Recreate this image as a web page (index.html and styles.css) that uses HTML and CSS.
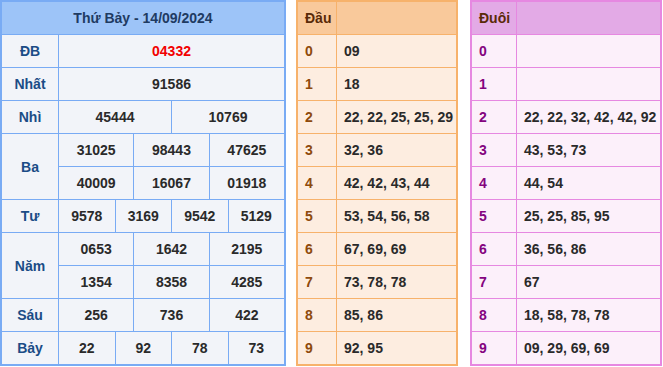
FILE: index.html
```html
<!DOCTYPE html>
<html lang="vi">
<head>
<meta charset="utf-8">
<title>Kết quả xổ số Thứ Bảy - 14/09/2024</title>
<link rel="stylesheet" href="styles.css">
</head>
<body>
<div class="wrap">
  <div class="kq">
    <div class="title">Thứ Bảy - 14/09/2024</div>
    <div class="lbl">ĐB</div><div class="v s12 red">04332</div>
    <div class="lbl">Nhất</div><div class="v s12">91586</div>
    <div class="lbl">Nhì</div><div class="v s6">45444</div><div class="v s6">10769</div>
    <div class="lbl r2">Ba</div><div class="v s4">31025</div><div class="v s4">98443</div><div class="v s4">47625</div>
    <div class="v s4">40009</div><div class="v s4">16067</div><div class="v s4">01918</div>
    <div class="lbl">Tư</div><div class="v s3">9578</div><div class="v s3">3169</div><div class="v s3">9542</div><div class="v s3">5129</div>
    <div class="lbl r2">Năm</div><div class="v s4">0653</div><div class="v s4">1642</div><div class="v s4">2195</div>
    <div class="v s4">1354</div><div class="v s4">8358</div><div class="v s4">4285</div>
    <div class="lbl">Sáu</div><div class="v s4">256</div><div class="v s4">736</div><div class="v s4">422</div>
    <div class="lbl">Bảy</div><div class="v s3">22</div><div class="v s3">92</div><div class="v s3">78</div><div class="v s3">73</div>
  </div>

  <div class="lt dau">
    <div class="h">Đầu</div><div class="h"></div>
    <div class="k">0</div><div class="n">09</div>
    <div class="k">1</div><div class="n">18</div>
    <div class="k">2</div><div class="n">22, 22, 25, 25, 29</div>
    <div class="k">3</div><div class="n">32, 36</div>
    <div class="k">4</div><div class="n">42, 42, 43, 44</div>
    <div class="k">5</div><div class="n">53, 54, 56, 58</div>
    <div class="k">6</div><div class="n">67, 69, 69</div>
    <div class="k">7</div><div class="n">73, 78, 78</div>
    <div class="k">8</div><div class="n">85, 86</div>
    <div class="k">9</div><div class="n">92, 95</div>
  </div>

  <div class="lt duoi">
    <div class="h">Đuôi</div><div class="h"></div>
    <div class="k">0</div><div class="n"></div>
    <div class="k">1</div><div class="n"></div>
    <div class="k">2</div><div class="n">22, 22, 32, 42, 42, 92</div>
    <div class="k">3</div><div class="n">43, 53, 73</div>
    <div class="k">4</div><div class="n">44, 54</div>
    <div class="k">5</div><div class="n">25, 25, 85, 95</div>
    <div class="k">6</div><div class="n">36, 56, 86</div>
    <div class="k">7</div><div class="n">67</div>
    <div class="k">8</div><div class="n">18, 58, 78, 78</div>
    <div class="k">9</div><div class="n">09, 29, 69, 69</div>
  </div>
</div>
</body>
</html>
```

FILE: styles.css
```css
* { box-sizing: border-box; }
html, body { margin: 0; padding: 0; background: #fff; }
body {
  font-family: "Liberation Sans", Arial, sans-serif;
  font-size: 14px;
  font-weight: bold;
  color: #2a2a2a;
}
.wrap {
  display: flex;
  align-items: flex-start;
}
.kq {
  width: 286px;
  display: grid;
  grid-template-columns: 56px repeat(12, 1fr);
  grid-auto-rows: 32px;
  gap: 1px;
  background: #79abf4;
  border: 2px solid #79abf4;
}
.kq > div {
  background: #f2f4f9;
  display: flex;
  align-items: center;
  justify-content: center;
}
.kq .title {
  grid-column: 1 / -1;
  background: #9dc4f8;
  color: #1f3b62;
}
.kq .lbl { color: #1b4c86; }
.kq .r2 { grid-row: span 2; }
.s12 { grid-column: span 12; }
.s6 { grid-column: span 6; }
.s4 { grid-column: span 4; }
.s3 { grid-column: span 3; }
.red { color: #f20000; }

.lt {
  display: grid;
  grid-auto-rows: 32px;
  gap: 1px;
}
.lt > div {
  display: flex;
  align-items: center;
  padding-left: 7px;
}
.dau {
  width: 162px;
  margin-left: 10px;
  grid-template-columns: 38px 1fr;
  background: #f7b26b;
  border: 2px solid #f7b26b;
}
.dau > div { background: #fdede0; }
.dau .h { background: #f9c99b; color: #5a2a08; }
.dau .k { color: #8e4a0c; }

.duoi {
  width: 192px;
  margin-left: 12px;
  grid-template-columns: 44px 1fr;
  background: #e688e1;
  border: 2px solid #e688e1;
}
.duoi > div { background: #fcf0fa; }
.duoi .h { background: #e3aae6; color: #5a2a08; }
.duoi .k { color: #84047f; }
.n { color: #2a2a2a; }
```
